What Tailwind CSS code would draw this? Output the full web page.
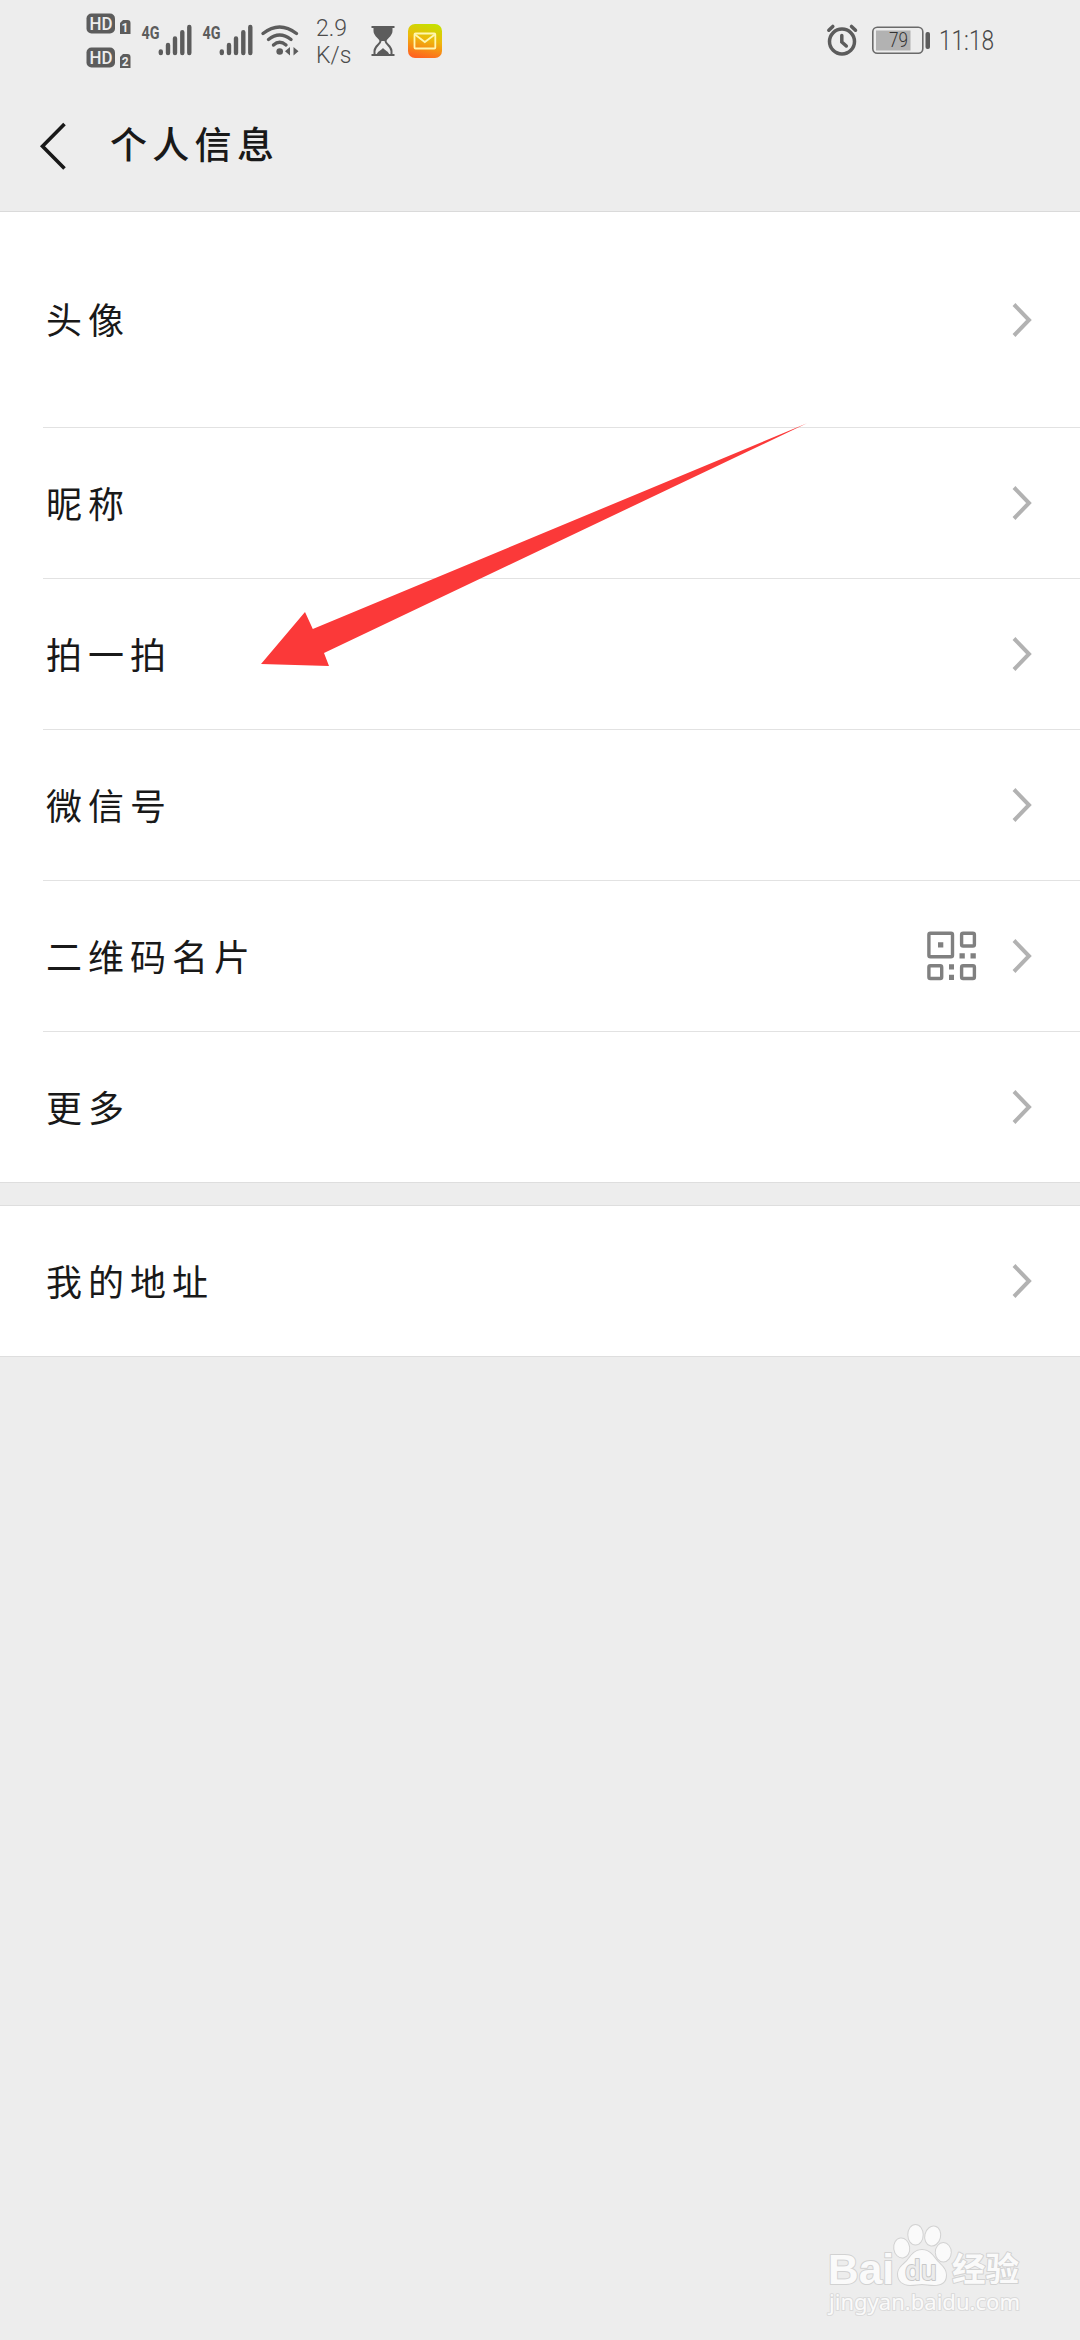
<!DOCTYPE html>
<html lang="zh-CN">
<head>
<meta charset="utf-8">
<title>个人信息</title>
<script src="https://cdn.jsdelivr.net/npm/@tailwindcss/browser@4"></script>
</head>
<body class="bg-[#ededed]">
<svg class="hidden">
  <symbol id="chev" viewBox="0 0 24 38"><path d="M4 3.500 19 19 4 34.500" fill="none" stroke="#b2b2b2" stroke-width="4"/></symbol>
</svg>
<div class="relative flex h-[2340px] w-[1080px] flex-col overflow-hidden bg-[#ededed] font-['Noto_Sans_CJK_SC',sans-serif] text-[#191919]">

  <!-- Status bar -->
  <div class="flex h-20 shrink-0 justify-between pl-[84px] pr-20">
    <div class="flex">
      <svg class="h-20 w-[50px]" viewBox="84 0 50 80" fill="#5c5c5c" font-family="Roboto, sans-serif">
        <rect x="86.500" y="13.500" width="28.500" height="20" rx="5"/>
        <rect x="86.500" y="47.500" width="28.500" height="20" rx="5"/>
        <path d="M120 34V23l3-3h4.500a3 3 0 0 1 3 3v11zM120 68V57l3-3h4.500a3 3 0 0 1 3 3v11z"/>
        <g fill="#ededed" text-anchor="middle">
          <text x="101" y="30" font-size="18" font-weight="500" textLength="23" lengthAdjust="spacingAndGlyphs">HD</text>
          <text x="101" y="64" font-size="18" font-weight="500" textLength="23" lengthAdjust="spacingAndGlyphs">HD</text>
          <text x="125" y="32" font-size="12" font-weight="700">1</text>
          <text x="125.300" y="66" font-size="12" font-weight="700">2</text>
        </g>
      </svg>
      <svg class="h-20 w-[61px]" viewBox="134 0 61 80" fill="none" stroke="#5c5c5c" stroke-width="4.400" stroke-linecap="round">
        <text x="141.500" y="38.500" font-family="Roboto, sans-serif" font-size="19" font-weight="700" fill="#5c5c5c" stroke="none" textLength="18" lengthAdjust="spacingAndGlyphs">4G</text>
        <path d="M160.800 51.500v1.500M168 45v8M175 38.500V53M182.300 32.200V53M189.300 27V53"/>
      </svg>
      <svg class="h-20 w-[61px]" viewBox="134 0 61 80" fill="none" stroke="#5c5c5c" stroke-width="4.400" stroke-linecap="round">
        <text x="141.500" y="38.500" font-family="Roboto, sans-serif" font-size="19" font-weight="700" fill="#5c5c5c" stroke="none" textLength="18" lengthAdjust="spacingAndGlyphs">4G</text>
        <path d="M160.800 51.500v1.500M168 45v8M175 38.500V53M182.300 32.200V53M189.300 27V53"/>
      </svg>
      <svg class="h-20 w-[49px]" viewBox="256 0 49 80" fill="none" stroke="#5c5c5c" stroke-width="3.400" stroke-linecap="round">
        <path d="M263 33.500Q279.500 20.500 296.500 33.500M268.500 39.500Q279.500 30.500 291 39.500M273.500 45Q279.500 39.500 286 45"/>
        <circle cx="279.700" cy="51.500" r="3.300" fill="#5c5c5c" stroke="none"/>
        <path d="M285 51.300l5-4.300v8.600zM298.500 51.300l-5-4.300v8.600z" fill="#5c5c5c" stroke="none"/>
      </svg>
      <div class="flex w-[57px] flex-col pl-[11px] pt-[15px] font-['Roboto'] text-[23px] font-light leading-[27px] text-[#4c4c4c]">
        <span>2.9</span><span>K/s</span>
      </div>
      <svg class="h-20 w-[42px]" viewBox="362 0 42 80" fill="none" stroke="#5c5c5c" stroke-width="2">
        <path d="M371.500 27h23M371.500 55h23"/>
        <path d="M374.500 27v4c0 5 6 7 6 10s-6 5-6 10v4M391.500 27v4c0 5-6 7-6 10s6 5 6 10v4"/>
        <path d="M374.500 27h17v4c0 4-6 7-6.500 10h-4c-.5-3-6.500-6-6.500-10zM376.500 55c1-4 4-4 6.500-7 2.500 3 5.500 3 6.500 7z" fill="#5c5c5c" stroke="none"/>
      </svg>
      <svg class="h-20 w-[40px]" viewBox="404 0 40 80" fill="none" stroke="#fff7b0" stroke-width="1.800">
        <defs><linearGradient id="mail" x1=".65" y1="0" x2=".4" y2="1"><stop offset="0" stop-color="#c6e000"/><stop offset=".45" stop-color="#eeb80c"/><stop offset="1" stop-color="#ff6420"/></linearGradient></defs>
        <rect x="408" y="24" width="34" height="34" rx="7" fill="url(#mail)" stroke="none"/>
        <rect x="414.500" y="33.500" width="20.800" height="15" rx="1"/>
        <path d="M415 34.500l9.800 7.500 10-7.500"/>
      </svg>
    </div>
    <div class="flex">
      <svg class="h-20 w-[44px]" viewBox="824 0 44 80" fill="none" stroke="#5c5c5c" stroke-width="3.500" stroke-linecap="round">
        <circle cx="842" cy="41.500" r="12.500"/>
        <path d="M828.800 30.200l4-3.800M855.500 30.200l-4-3.800M841.800 35.500v6.500l4.500 4"/>
      </svg>
      <svg class="h-20 w-[68px]" viewBox="868 0 68 80">
        <rect x="872.800" y="27.300" width="50" height="26" rx="4.500" fill="none" stroke="#6a6a6a" stroke-width="1.600"/>
        <rect x="876" y="30.500" width="34.500" height="20" fill="#b2b2b2"/>
        <rect x="925.500" y="32" width="4.500" height="17" rx="2" fill="#5c5c5c"/>
        <text x="889" y="47" font-family="Roboto, sans-serif" font-size="20" font-weight="300" fill="#333" textLength="19" lengthAdjust="spacingAndGlyphs">79</text>
      </svg>
      <svg class="h-20 w-16" viewBox="936 0 64 80">
        <text x="939" y="50" font-family="Roboto, sans-serif" font-size="27" font-weight="300" fill="#484848" textLength="55" lengthAdjust="spacingAndGlyphs">11:18</text>
      </svg>
    </div>
  </div>

  <!-- Title bar -->
  <header class="flex h-[132px] shrink-0 items-center border-b border-[#dadada] pl-[38px]">
    <svg class="h-[50px] w-8" viewBox="38 121 32 50" fill="none" stroke="#191919" stroke-width="3.600"><path d="M64.500 124 42.500 146.300 64.500 168.500"/></svg>
    <h1 class="pb-1 pl-10 text-[37px] font-medium leading-none tracking-[5.300px]">个人信息</h1>
  </header>

  <!-- Profile rows -->
  <main class="flex flex-col text-4xl font-normal tracking-[6px] [&_span]:pb-[3px]">
    <section class="flex flex-col border-b border-[#dedede] bg-white pl-[43px]">
      <div class="flex h-[216px] items-center justify-between border-b border-[#e2e2e2] pl-[3px] pr-[46px]"><span>头像</span><svg class="h-[38px] w-6"><use href="#chev"/></svg></div>
      <div class="flex h-[151px] items-center justify-between border-b border-[#e2e2e2] pl-[3px] pr-[46px]"><span>昵称</span><svg class="h-[38px] w-6"><use href="#chev"/></svg></div>
      <div class="flex h-[151px] items-center justify-between border-b border-[#e2e2e2] pl-[3px] pr-[46px]"><span>拍一拍</span><svg class="h-[38px] w-6"><use href="#chev"/></svg></div>
      <div class="flex h-[151px] items-center justify-between border-b border-[#e2e2e2] pl-[3px] pr-[46px]"><span>微信号</span><svg class="h-[38px] w-6"><use href="#chev"/></svg></div>
      <div class="flex h-[151px] items-center justify-between border-b border-[#e2e2e2] pl-[3px] pr-[46px]">
        <span>二维码名片</span>
        <div class="flex items-center gap-[33px]">
          <svg class="h-[50px] w-[50px]" viewBox="0 0 50 50" fill="none" stroke="#808080" stroke-width="3.400">
            <rect x="1.900" y="2.200" width="23.600" height="23.600" rx="1.500"/>
            <rect x="34.600" y="2.200" width="12.800" height="12.800" rx="1.500"/>
            <rect x="1.900" y="34.700" width="12.800" height="12.800" rx="1.500"/>
            <rect x="34.600" y="34.700" width="12.800" height="12.800" rx="1.500"/>
            <path d="M11 11.300h5.300v5.300H11zM32.500 22.200h5.300v5.300h-5.300zM43.500 22.200h5.300v5.300h-5.300zM22 33.200h5v5.300h-5zM22 43.700h5V49h-5z" fill="#808080" stroke="none"/>
          </svg>
          <svg class="h-[38px] w-6"><use href="#chev"/></svg>
        </div>
      </div>
      <div class="flex h-[150px] items-center justify-between pl-[3px] pr-[46px]"><span>更多</span><svg class="h-[38px] w-6"><use href="#chev"/></svg></div>
    </section>
    <section class="mt-[22px] border-y border-[#dedede] bg-white pl-[43px]">
      <div class="flex h-[150px] items-center justify-between pl-[3px] pr-[46px]"><span>我的地址</span><svg class="h-[38px] w-6"><use href="#chev"/></svg></div>
    </section>
  </main>

  <!-- Red pointer laid over the list -->
  <svg class="absolute left-[260px] top-[420px] h-[250px] w-[550px]" viewBox="260 420 550 250"><path d="M261 664 305 612 312.800 629 807 423.300 324 653 329 666z" fill="#fb3939"/></svg>

  <!-- Watermark -->
  <svg class="absolute left-[820px] top-[2215px] h-[110px] w-[210px]" viewBox="820 2215 210 110" fill="#fafafa" stroke="#d2d2d2" stroke-width="2" paint-order="stroke" stroke-linejoin="round">
    <text x="828" y="2284" font-family="Liberation Sans, sans-serif" font-weight="700" font-size="43" textLength="66" lengthAdjust="spacingAndGlyphs">Bai</text>
    <ellipse cx="901.700" cy="2248" rx="7.500" ry="9.500" transform="rotate(-8 901.700 2248)"/>
    <ellipse cx="915.500" cy="2234.800" rx="7.200" ry="9.800"/>
    <ellipse cx="932.700" cy="2236" rx="7.400" ry="9.600" transform="rotate(14 932.700 2236)"/>
    <ellipse cx="943.300" cy="2252.300" rx="7.500" ry="9.200"/>
    <path d="M922 2250c8 0 11 6 15 11 5 5 9 8 9 14 0 8-6 10-12 10-5 0-8-1-12-1s-7 1-12 1c-7 0-12-4-12-11 0-6 5-9 9-13 4-5 7-11 15-11z"/>
    <text x="905" y="2280" font-family="Open Sans, sans-serif" font-size="27" font-weight="600" fill="#ececec" stroke="#c8c8c8" stroke-width="2" textLength="32" lengthAdjust="spacingAndGlyphs">du</text>
    <text x="952" y="2281" font-family="Noto Sans CJK SC, sans-serif" font-weight="700" font-size="33" textLength="67" lengthAdjust="spacingAndGlyphs">经验</text>
    <text x="829" y="2310" font-family="Noto Sans, sans-serif" font-size="22" stroke="#dadada" textLength="191" lengthAdjust="spacingAndGlyphs">jingyan.baidu.com</text>
  </svg>
</div>
</body>
</html>
